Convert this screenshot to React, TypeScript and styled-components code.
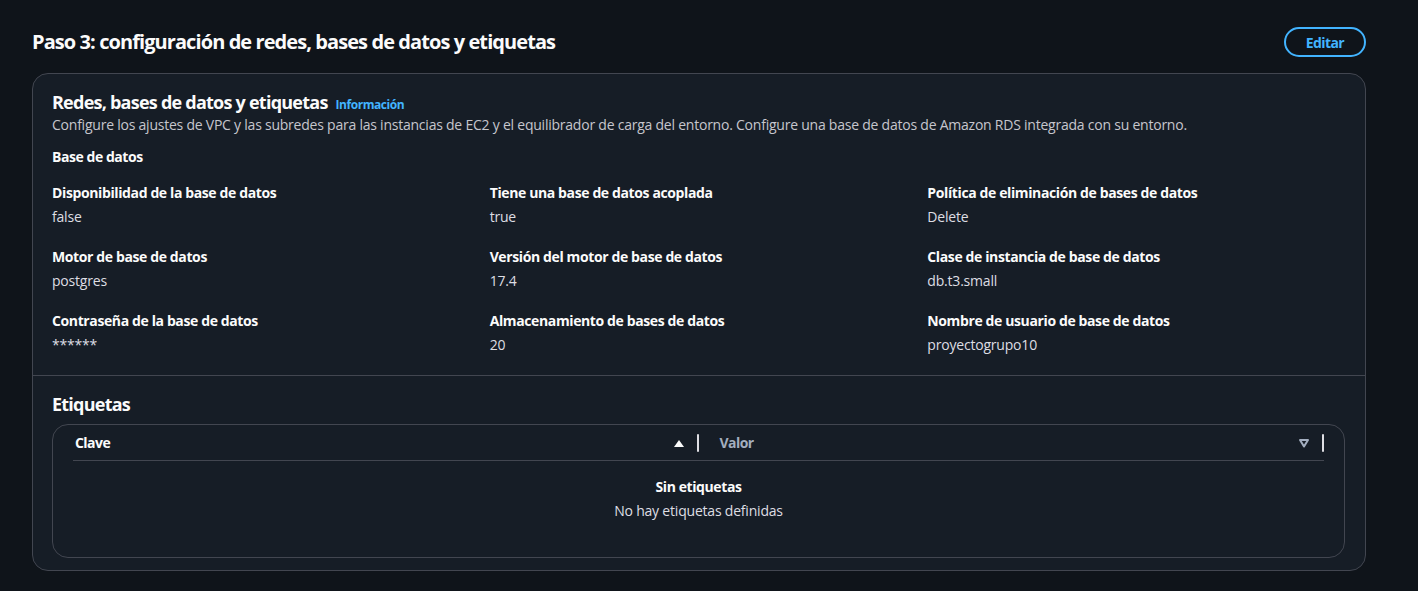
import React from "react";
import styled, { createGlobalStyle } from "styled-components";

const Global = createGlobalStyle`
  html, body { margin: 0; padding: 0; background: #0f141a; }
  body { font-family: "Open Sans", "Noto Sans", Arial, sans-serif; color: #dedee3; }
  * { box-sizing: border-box; }
`;

const Page = styled.div`
  padding: 27px 52px 20px 32px;
  width: 1418px;
`;

const HeaderRow = styled.div`
  display: flex;
  align-items: center;
  justify-content: space-between;
  height: 30px;
  margin-bottom: 16px;
`;

const PageTitle = styled.h2`
  margin: 0;
  font-size: 20px;
  line-height: 24px;
  font-weight: 700;
  color: #fbfbfb;
  letter-spacing: -0.92px;
`;

const EditButton = styled.button`
  height: 30px;
  width: 82px;
  padding: 0;
  border: 2px solid #42b4ff;
  border-radius: 20px;
  background: transparent;
  color: #42b4ff;
  font-family: inherit;
  font-size: 14px;
  font-weight: 700;
  letter-spacing: -0.6px;
  cursor: pointer;
`;

const Container = styled.section`
  border: 1px solid #424650;
  border-radius: 16px;
  background: #161d26;
  overflow: hidden;
`;

const Section = styled.div<{ $top: number; $bottom: number }>`
  padding: ${(p) => p.$top}px 20px ${(p) => p.$bottom}px 19px;
`;

const Divider = styled.div`
  height: 1px;
  background: #424650;
`;

const TitleLine = styled.div`
  display: flex;
  align-items: baseline;
  gap: 8px;
`;

const SectionTitle = styled.h3`
  margin: 0;
  font-size: 18px;
  line-height: 22px;
  font-weight: 700;
  color: #fbfbfb;
  letter-spacing: -0.76px;
`;

const InfoLink = styled.a`
  font-size: 12px;
  font-weight: 700;
  color: #42b4ff;
  text-decoration: none;
  letter-spacing: -0.45px;
`;

const Description = styled.p`
  margin: 2px 0 0;
  font-size: 14px;
  line-height: 20px;
  color: #c6c6cd;
  letter-spacing: -0.23px;
`;

const GroupLabel = styled.div`
  margin-top: 12px;
  font-size: 14px;
  line-height: 20px;
  font-weight: 700;
  color: #fbfbfb;
  letter-spacing: -0.45px;
`;

const Grid = styled.div`
  margin-top: 16px;
  display: grid;
  grid-template-columns: repeat(3, 1fr);
  column-gap: 20px;
  row-gap: 20px;
`;

const Pair = styled.div`
  display: flex;
  flex-direction: column;
  gap: 4px;
`;

const Key = styled.div`
  font-size: 14px;
  line-height: 20px;
  font-weight: 700;
  color: #fbfbfb;
  letter-spacing: -0.38px;
`;

const Value = styled.div`
  font-size: 14px;
  line-height: 20px;
  color: #dedee3;
  letter-spacing: -0.2px;
`;

const TableBox = styled.div`
  margin-top: 9px;
  border: 1px solid #424650;
  border-radius: 16px;
  padding: 0 20px 36px;
`;

const HeadRow = styled.div`
  display: grid;
  grid-template-columns: 1fr 1fr;
  border-bottom: 1px solid #424650;
  height: 36px;
`;

const HeadCell = styled.div<{ $active?: boolean }>`
  display: flex;
  align-items: center;
  justify-content: space-between;
  padding-left: ${(p) => (p.$active ? 2 : 21)}px;
  font-size: 14px;
  font-weight: 700;
  letter-spacing: -0.55px;
  color: ${(p) => (p.$active ? "#fbfbfb" : "#a3aebf")};
`;

const SortArea = styled.div`
  display: flex;
  align-items: center;
  gap: 12px;
`;

const Resizer = styled.span`
  width: 2px;
  height: 18px;
  background: #dedee3;
  border-radius: 1px;
`;

const Empty = styled.div`
  padding-top: 16px;
  text-align: center;
`;

const EmptyTitle = styled.div`
  font-size: 14px;
  line-height: 20px;
  font-weight: 700;
  color: #fbfbfb;
  letter-spacing: -0.4px;
`;

const EmptyText = styled.div`
  margin-top: 4px;
  font-size: 14px;
  line-height: 20px;
  color: #dedee3;
  letter-spacing: -0.2px;
`;

const SortUp = () => (
  <svg width="12" height="12" viewBox="0 0 12 12">
    <path d="M1 10 L6 3 L11 10 Z" fill="#fbfbfb" />
  </svg>
);

const SortDown = () => (
  <svg width="12" height="12" viewBox="0 0 12 12">
    <path d="M2 3 L10 3 L6 9.5 Z" fill="none" stroke="#a3aebf" strokeWidth="2" strokeLinejoin="round" />
  </svg>
);

const fields: [string, string][] = [
  ["Disponibilidad de la base de datos", "false"],
  ["Tiene una base de datos acoplada", "true"],
  ["Política de eliminación de bases de datos", "Delete"],
  ["Motor de base de datos", "postgres"],
  ["Versión del motor de base de datos", "17.4"],
  ["Clase de instancia de base de datos", "db.t3.small"],
  ["Contraseña de la base de datos", "******"],
  ["Almacenamiento de bases de datos", "20"],
  ["Nombre de usuario de base de datos", "proyectogrupo10"],
];

export default function App() {
  return (
    <>
      <Global />
      <Page>
        <HeaderRow>
          <PageTitle>Paso 3: configuración de redes, bases de datos y etiquetas</PageTitle>
          <EditButton>Editar</EditButton>
        </HeaderRow>
        <Container>
          <Section $top={17} $bottom={20}>
            <TitleLine>
              <SectionTitle>Redes, bases de datos y etiquetas</SectionTitle>
              <InfoLink href="#">Información</InfoLink>
            </TitleLine>
            <Description>
              Configure los ajustes de VPC y las subredes para las instancias de EC2 y el equilibrador de carga del entorno. Configure una base de datos de Amazon RDS integrada con su entorno.
            </Description>
            <GroupLabel>Base de datos</GroupLabel>
            <Grid>
              {fields.map(([k, v]) => (
                <Pair key={k}>
                  <Key>{k}</Key>
                  <Value>{v}</Value>
                </Pair>
              ))}
            </Grid>
          </Section>
          <Divider />
          <Section $top={17} $bottom={12}>
            <SectionTitle>Etiquetas</SectionTitle>
            <TableBox>
              <HeadRow>
                <HeadCell $active>
                  Clave
                  <SortArea>
                    <SortUp />
                    <Resizer />
                  </SortArea>
                </HeadCell>
                <HeadCell>
                  Valor
                  <SortArea>
                    <SortDown />
                    <Resizer />
                  </SortArea>
                </HeadCell>
              </HeadRow>
              <Empty>
                <EmptyTitle>Sin etiquetas</EmptyTitle>
                <EmptyText>No hay etiquetas definidas</EmptyText>
              </Empty>
            </TableBox>
          </Section>
        </Container>
      </Page>
    </>
  );
}
